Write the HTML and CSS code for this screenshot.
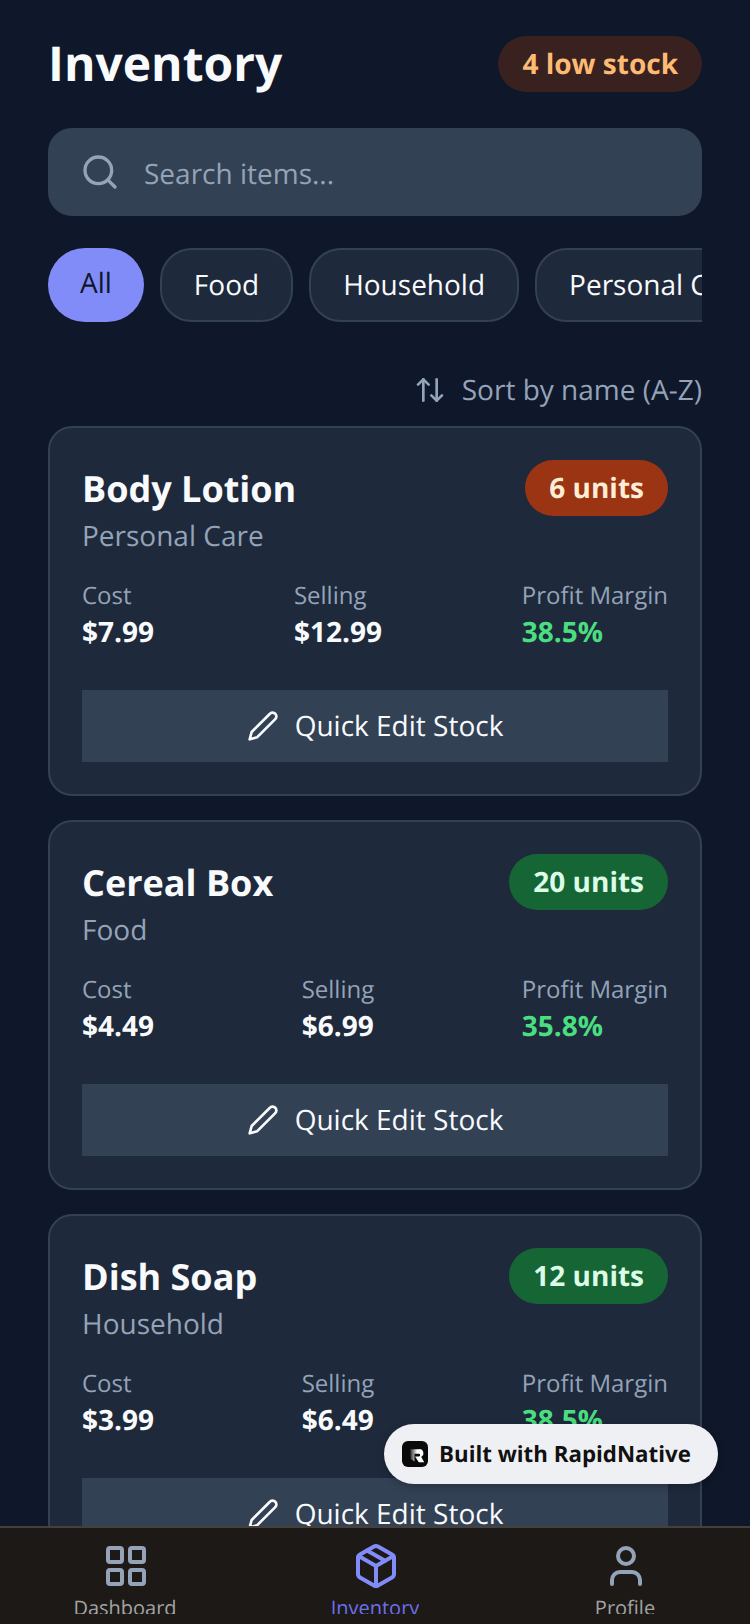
FILE: index.html
```html
<!DOCTYPE html>
<html lang="en">
<head>
    <meta charset="UTF-8">
    <meta name="viewport" content="width=device-width, initial-scale=1.0">
    <title>Inventory</title>
    <link rel="stylesheet" href="styles.css">
</head>
<body>

<div class="app">
    <main class="content">
        <header class="top-row">
            <h1 class="page-title">Inventory</h1>
            <span class="low-badge">4 low stock</span>
        </header>

        <div class="search-box">
            <svg class="search-icon" viewBox="0 0 24 24" fill="none" stroke="currentColor" stroke-width="2" stroke-linecap="round" stroke-linejoin="round"><circle cx="11" cy="11" r="8"/><path d="m21 21-4.3-4.3"/></svg>
            <span class="search-text">Search items...</span>
        </div>

        <div class="chips">
            <span class="chip chip-active">All</span>
            <span class="chip">Food</span>
            <span class="chip">Household</span>
            <span class="chip">Personal Care</span>
        </div>

        <div class="sort-row">
            <svg class="sort-icon" viewBox="0 0 24 24" fill="none" stroke="currentColor" stroke-width="2" stroke-linecap="round" stroke-linejoin="round"><path d="m21 16-4 4-4-4"/><path d="M17 20V4"/><path d="m3 8 4-4 4 4"/><path d="M7 4v16"/></svg>
            <span>Sort by name (A-Z)</span>
        </div>

        <!-- Item cards -->
        <section class="card">
            <div class="card-head">
                <div>
                    <h2 class="item-name">Body Lotion</h2>
                    <p class="item-cat">Personal Care</p>
                </div>
                <span class="units units-low">6 units</span>
            </div>
            <div class="stats">
                <div><p class="stat-label">Cost</p><p class="stat-value">$7.99</p></div>
                <div><p class="stat-label">Selling</p><p class="stat-value">$12.99</p></div>
                <div><p class="stat-label">Profit Margin</p><p class="stat-value margin">38.5%</p></div>
            </div>
            <div class="edit-btn">
                <svg class="edit-icon" viewBox="0 0 24 24" fill="none" stroke="currentColor" stroke-width="2" stroke-linecap="round" stroke-linejoin="round"><path d="M17 3a2.85 2.83 0 1 1 4 4L7.5 20.5 2 22l1.5-5.5Z"/></svg>
                <span>Quick Edit Stock</span>
            </div>
        </section>

        <section class="card">
            <div class="card-head">
                <div>
                    <h2 class="item-name">Cereal Box</h2>
                    <p class="item-cat">Food</p>
                </div>
                <span class="units units-ok">20 units</span>
            </div>
            <div class="stats">
                <div><p class="stat-label">Cost</p><p class="stat-value">$4.49</p></div>
                <div><p class="stat-label">Selling</p><p class="stat-value">$6.99</p></div>
                <div><p class="stat-label">Profit Margin</p><p class="stat-value margin">35.8%</p></div>
            </div>
            <div class="edit-btn">
                <svg class="edit-icon" viewBox="0 0 24 24" fill="none" stroke="currentColor" stroke-width="2" stroke-linecap="round" stroke-linejoin="round"><path d="M17 3a2.85 2.83 0 1 1 4 4L7.5 20.5 2 22l1.5-5.5Z"/></svg>
                <span>Quick Edit Stock</span>
            </div>
        </section>

        <section class="card">
            <div class="card-head">
                <div>
                    <h2 class="item-name">Dish Soap</h2>
                    <p class="item-cat">Household</p>
                </div>
                <span class="units units-ok">12 units</span>
            </div>
            <div class="stats">
                <div><p class="stat-label">Cost</p><p class="stat-value">$3.99</p></div>
                <div><p class="stat-label">Selling</p><p class="stat-value">$6.49</p></div>
                <div><p class="stat-label">Profit Margin</p><p class="stat-value margin">38.5%</p></div>
            </div>
            <div class="edit-btn">
                <svg class="edit-icon" viewBox="0 0 24 24" fill="none" stroke="currentColor" stroke-width="2" stroke-linecap="round" stroke-linejoin="round"><path d="M17 3a2.85 2.83 0 1 1 4 4L7.5 20.5 2 22l1.5-5.5Z"/></svg>
                <span>Quick Edit Stock</span>
            </div>
        </section>
    </main>

    <nav class="tabbar">
        <div class="tab">
            <svg class="tab-icon" viewBox="0 0 24 24" fill="none" stroke="currentColor" stroke-width="2" stroke-linecap="round" stroke-linejoin="round"><rect x="3" y="3" width="7" height="7" rx="1"/><rect x="14" y="3" width="7" height="7" rx="1"/><rect x="14" y="14" width="7" height="7" rx="1"/><rect x="3" y="14" width="7" height="7" rx="1"/></svg>
            <span class="tab-label">Dashboard</span>
        </div>
        <div class="tab tab-active">
            <svg class="tab-icon" viewBox="0 0 24 24" fill="none" stroke="currentColor" stroke-width="2" stroke-linecap="round" stroke-linejoin="round"><path d="M21 8a2 2 0 0 0-1-1.73l-7-4a2 2 0 0 0-2 0l-7 4A2 2 0 0 0 3 8v8a2 2 0 0 0 1 1.73l7 4a2 2 0 0 0 2 0l7-4A2 2 0 0 0 21 16Z"/><path d="m3.3 7 8.7 5 8.7-5"/><path d="M12 22V12"/><path d="m7.5 4.27 9 5.15"/></svg>
            <span class="tab-label">Inventory</span>
        </div>
        <div class="tab">
            <svg class="tab-icon" viewBox="0 0 24 24" fill="none" stroke="currentColor" stroke-width="2" stroke-linecap="round" stroke-linejoin="round"><path d="M19 21v-2a4 4 0 0 0-4-4H9a4 4 0 0 0-4 4v2"/><circle cx="12" cy="7" r="4"/></svg>
            <span class="tab-label">Profile</span>
        </div>
    </nav>

    <div class="built-badge">
        <span class="built-logo">
            <svg viewBox="0 0 24 24">
                <defs>
                    <linearGradient id="logoFade" x1="0" y1="0" x2="1" y2="0">
                        <stop offset="0" stop-color="#2a2a2a"/>
                        <stop offset="0.5" stop-color="#fff"/>
                    </linearGradient>
                </defs>
                <path d="M7.500 7.500H16a3.700 3.700 0 0 1 1.700 7L20.500 19.500H15.500L12 14.300h3.500a1.300 1.300 0 0 0 0-2.600H11.500V19L8 16.500z" fill="url(#logoFade)"/>
            </svg>
        </span>
        <span class="built-text">Built with RapidNative</span>
    </div>
</div>

</body>
</html>
```

FILE: styles.css
```css
* {
    box-sizing: border-box;
}

html, body {
    margin: 0;
    height: 100%;
}

body {
    font-family: "Open Sans", "Noto Sans", sans-serif;
    text-rendering: geometricPrecision;
    background-color: #0f172a;
}

p, h1, h2 {
    margin: 0;
}

.app {
    position: relative;
    width: 750px;
    height: 1624px;
    display: flex;
    flex-direction: column;
    overflow: hidden;
    background-color: #0f172a;
}

.content {
    flex: 1;
    min-height: 0;
    overflow: hidden;
    padding: 32px 48px 0;
}

.top-row {
    display: flex;
    justify-content: space-between;
    align-items: center;
    height: 64px;
    margin-bottom: 32px;
}

.page-title {
    font-size: 48px;
    line-height: 64px;
    font-weight: 700;
    color: #f8fafc;
}

.low-badge {
    height: 56px;
    line-height: 56px;
    padding: 0 24px;
    border-radius: 28px;
    font-size: 28px;
    font-weight: 700;
    color: #fdba74;
    background-color: #38211f;
}

.search-box {
    display: flex;
    align-items: center;
    gap: 24px;
    height: 88px;
    padding: 0 32px;
    border-radius: 24px;
    background-color: #334155;
    color: #94a3b8;
    font-size: 28px;
}

.search-icon {
    width: 40px;
    height: 40px;
}

.search-text {
    padding-top: 4px;
}

.chips {
    display: flex;
    gap: 16px;
    margin-top: 32px;
    height: 74px;
    overflow: hidden;
}

.chip {
    flex: none;
    display: flex;
    align-items: center;
    padding: 0 32px;
    border-radius: 32px;
    border: 2px solid #334155;
    background-color: #1e293b;
    color: #f8fafc;
    font-size: 28px;
}

.chip-active {
    border: none;
    background-color: #818cf8;
    color: #0f172a;
    padding-bottom: 5px;
    border-radius: 48px;
}

.sort-row {
    display: flex;
    justify-content: flex-end;
    align-items: center;
    gap: 16px;
    margin-top: 48px;
    height: 40px;
    color: #94a3b8;
    font-size: 28px;
}

.sort-icon {
    width: 32px;
    height: 32px;
}

.card {
    margin-top: 16px;
    margin-bottom: 24px;
    height: 370px;
    padding: 32px;
    border: 2px solid #334155;
    border-radius: 24px;
    background-color: #1e293b;
}

.card + .card {
    margin-top: 0;
}

.card-head {
    display: flex;
    justify-content: space-between;
    align-items: flex-start;
}

.item-name {
    font-size: 36px;
    line-height: 58px;
    font-weight: 700;
    color: #f8fafc;
}

.item-cat {
    font-size: 28px;
    line-height: 36px;
    color: #94a3b8;
}

.units {
    height: 56px;
    line-height: 56px;
    padding: 0 24px;
    border-radius: 28px;
    font-size: 28px;
    font-weight: 700;
}

.units-low {
    background-color: #9a3412;
    color: #ffedd5;
}

.units-ok {
    background-color: #166534;
    color: #dcfce7;
}

.stats {
    display: flex;
    justify-content: space-between;
    margin-top: 24px;
}

.stat-label {
    font-size: 24px;
    line-height: 36px;
    color: #94a3b8;
}

.stat-value {
    font-size: 28px;
    line-height: 36px;
    font-weight: 700;
    color: #f8fafc;
}

.margin {
    color: #4ade80;
}

.edit-btn {
    display: flex;
    justify-content: center;
    align-items: center;
    gap: 16px;
    height: 72px;
    margin-top: 40px;
    background-color: #334155;
    color: #f8fafc;
    font-size: 28px;
}

.edit-icon {
    width: 32px;
    height: 32px;
}

.tabbar {
    flex: none;
    display: flex;
    height: 98px;
    padding-top: 14px;
    border-top: 2px solid #44403c;
    background-color: #1c1917;
}

.tab {
    flex: 1;
    display: flex;
    flex-direction: column;
    align-items: center;
    color: #94a3b8;
}

.tab-active {
    color: #818cf8;
}

.tab-icon {
    flex: none;
    width: 48px;
    height: 48px;
    margin-left: 2px;
}

/* labels get clipped by the bar in the design */
.tab-label {
    height: 24px;
    overflow: hidden;
    font-size: 20px;
    line-height: 36px;
    color: #a3a3a3;
}

.tab-active .tab-label {
    color: #6d70ea;
}

/* sits over the list */
.built-badge {
    position: absolute;
    left: 384px;
    top: 1424px;
    display: flex;
    align-items: center;
    gap: 11px;
    width: 334px;
    height: 60px;
    padding: 0 18px;
    border-radius: 30px;
    background-color: #eff0f3;
    color: #111;
    font-size: 22.3px;
    font-weight: 700;
    box-shadow: 0 2px 8px rgba(0, 0, 0, 0.25);
}

.built-text {
    white-space: nowrap;
    padding-bottom: 2px;
}

.built-logo {
    flex: none;
    width: 26px;
    height: 26px;
    border-radius: 6px;
    background-color: #0a0a0a;
}

.built-logo svg {
    display: block;
    width: 100%;
    height: 100%;
}
```
